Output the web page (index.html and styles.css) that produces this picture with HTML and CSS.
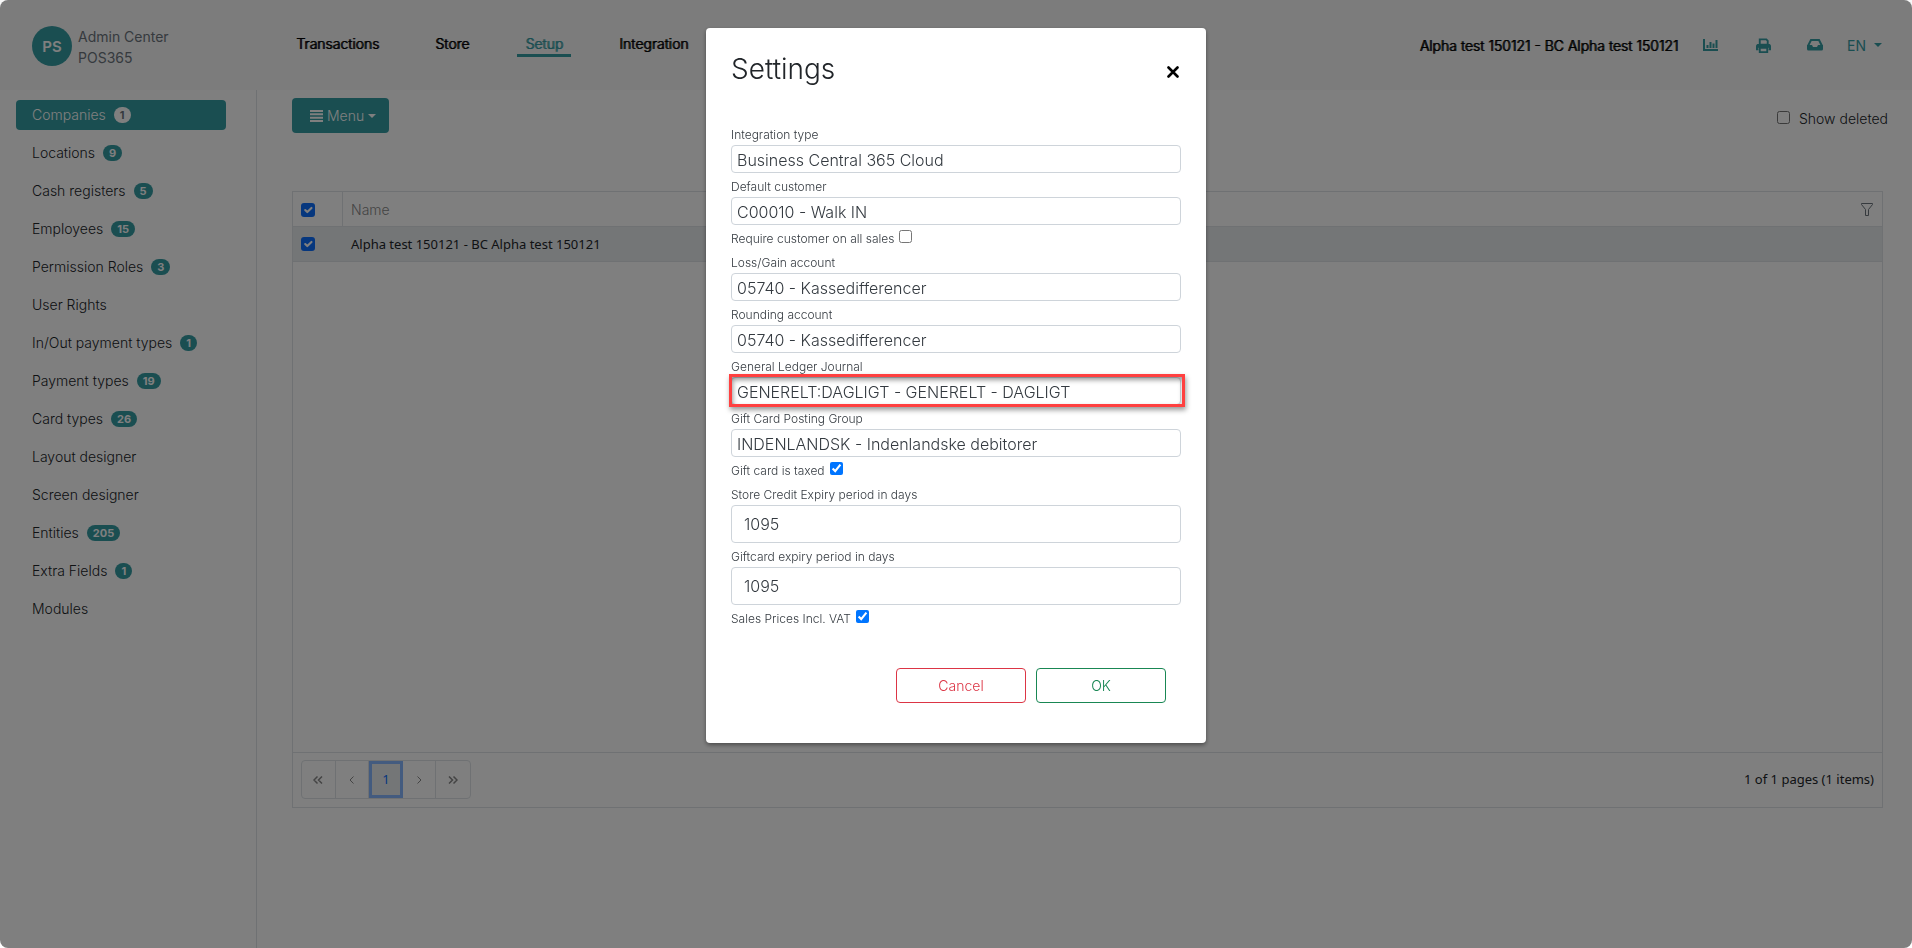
FILE: index.html
```html
<!DOCTYPE html>
<html lang="en">
<head>
    <meta charset="UTF-8">
    <meta name="viewport" content="width=device-width, initial-scale=1.0">
    <title>Admin Center POS365</title>
    <link rel="stylesheet" href="styles.css">
</head>
<body>
    <header class="topbar">
        <a class="brand" href="#">
            <span class="brand-logo">PS</span>
            <span class="brand-name">Admin Center<br>POS365</span>
        </a>
        <nav class="main-nav">
            <a href="#">Transactions</a>
            <a href="#">Store</a>
            <a href="#" class="active">Setup</a>
            <a href="#">Integration</a>
        </nav>
        <div class="topbar-right">
            <span class="company">Alpha test 150121 - BC Alpha test 150121</span>
            <a href="#" class="icon-link" aria-label="Reports">
                <svg width="16" height="14" viewBox="0 0 16 14"><path d="M1 1v11h14" fill="none" stroke="currentColor" stroke-width="2"/><path d="M3.500 7h2v3h-2zM6.500 4h2v6h-2zM9.500 5.500h2V10h-2zM12.500 2h2v8h-2z" fill="currentColor"/></svg>
            </a>
            <a href="#" class="icon-link" aria-label="Print">
                <svg width="15" height="15" viewBox="0 0 16 16"><path d="M4 7V1.500h7l1.500 1.500V7M2.500 12H1V9q0-2 2-2h10q2 0 2 2v3h-1.500M4 10.500h8v4.500H4z" fill="none" stroke="currentColor" stroke-width="2"/><path d="M1 7h14v3.500H1z" fill="currentColor"/></svg>
            </a>
            <a href="#" class="icon-link" aria-label="Inbox">
                <svg width="16" height="12" viewBox="0 0 16 12"><path d="M1.200 6.500 4 1h8l2.800 5.500" fill="none" stroke="currentColor" stroke-width="2"/><path d="M0 6h5l1 2h4l1-2h5v4q0 1.500-1.500 1.500h-13Q0 11.500 0 10z" fill="currentColor"/></svg>
            </a>
            <button type="button" class="lang">EN <span class="caret"></span></button>
        </div>
    </header>

    <div class="layout">
        <nav class="sidebar">
            <a href="#" class="active">Companies <span class="badge">1</span></a>
            <a href="#">Locations <span class="badge">9</span></a>
            <a href="#">Cash registers <span class="badge">5</span></a>
            <a href="#">Employees <span class="badge">15</span></a>
            <a href="#">Permission Roles <span class="badge">3</span></a>
            <a href="#">User Rights</a>
            <a href="#">In/Out payment types <span class="badge">1</span></a>
            <a href="#">Payment types <span class="badge">19</span></a>
            <a href="#">Card types <span class="badge">26</span></a>
            <a href="#">Layout designer</a>
            <a href="#">Screen designer</a>
            <a href="#">Entities <span class="badge">205</span></a>
            <a href="#">Extra Fields <span class="badge">1</span></a>
            <a href="#">Modules</a>
        </nav>

        <main class="content">
            <div class="toolbar">
                <button type="button" class="btn-menu">
                    <svg width="13" height="12" viewBox="0 0 13 12"><path d="M0 1h13M0 4.333h13M0 7.667h13M0 11h13" stroke="currentColor" stroke-width="2"/></svg>
                    Menu<span class="caret"></span>
                </button>
                <label class="show-deleted"><input type="checkbox"> Show deleted</label>
            </div>

            <div class="grid">
                <div class="grid-body">
                    <table>
                        <thead>
                            <tr>
                                <th class="col-check"><input type="checkbox" class="check" aria-label="Select all" checked></th>
                                <th>Name</th>
                                <th class="col-filter">
                                    <button type="button" class="filter" aria-label="Filter">
                                        <svg width="12" height="13" viewBox="0 0 12 13"><path d="M.5.5h11v1L7.500 6.500v6h-3v-6L.5 1.500z" fill="none" stroke="currentColor"/></svg>
                                    </button>
                                </th>
                            </tr>
                        </thead>
                        <tbody>
                            <tr>
                                <td><input type="checkbox" class="check" aria-label="Select row" checked></td>
                                <td colspan="2">Alpha test 150121 - BC Alpha test 150121</td>
                            </tr>
                        </tbody>
                    </table>
                </div>
                <div class="grid-footer">
                    <div class="pager">
                        <button type="button" aria-label="First page"><svg width="10" height="8" viewBox="0 0 10 8"><path d="M4.500.5 1 4l3.500 3.500M9 .5 5.500 4 9 7.500" fill="none" stroke="currentColor" stroke-width="1.500"/></svg></button>
                        <button type="button" aria-label="Previous page"><svg width="5" height="8" viewBox="0 0 5 8"><path d="M4.500.5 1 4l3.500 3.500" fill="none" stroke="currentColor"/></svg></button>
                        <button type="button" class="current">1</button>
                        <button type="button" aria-label="Next page"><svg width="5" height="8" viewBox="0 0 5 8"><path d="M.5.5 4 4 .5 7.500" fill="none" stroke="currentColor"/></svg></button>
                        <button type="button" aria-label="Last page"><svg width="10" height="8" viewBox="0 0 10 8"><path d="M1 .5 4.500 4 1 7.500M5.500.5 9 4 5.500 7.500" fill="none" stroke="currentColor" stroke-width="1.500"/></svg></button>
                    </div>
                    <span>1 of 1 pages (1 items)</span>
                </div>
            </div>
        </main>
    </div>

    <div class="overlay">
        <form class="modal" role="dialog" aria-labelledby="modalTitle">
            <div class="modal-header">
                <h3 id="modalTitle">Settings</h3>
                <button type="button" class="close" aria-label="Close">
                    <svg width="12" height="12" viewBox="0 0 12 12"><path d="M1.500 1.500l9 9M10.500 1.500l-9 9" stroke="currentColor" stroke-width="2.600" stroke-linecap="round"/></svg>
                </button>
            </div>

            <label for="integrationType">Integration type</label>
            <select id="integrationType"><option>Business Central 365 Cloud</option></select>

            <label for="defaultCustomer">Default customer</label>
            <select id="defaultCustomer"><option>C00010 - Walk IN</option></select>

            <label class="check-row">Require customer on all sales <input type="checkbox"></label>

            <label for="lossGain">Loss/Gain account</label>
            <select id="lossGain"><option>05740 - Kassedifferencer</option></select>

            <label for="rounding">Rounding account</label>
            <select id="rounding"><option>05740 - Kassedifferencer</option></select>

            <label for="journal">General Ledger Journal</label>
            <div class="highlighted">
                <select id="journal"><option>GENERELT:DAGLIGT - GENERELT - DAGLIGT</option></select>
            </div>

            <label for="postingGroup">Gift Card Posting Group</label>
            <select id="postingGroup"><option>INDENLANDSK - Indenlandske debitorer</option></select>

            <label class="check-row">Gift card is taxed <input type="checkbox" checked></label>

            <label for="storeCredit">Store Credit Expiry period in days</label>
            <input type="text" id="storeCredit" value="1095">

            <label for="giftcardExpiry">Giftcard expiry period in days</label>
            <input type="text" id="giftcardExpiry" value="1095">

            <label class="check-row">Sales Prices Incl. VAT <input type="checkbox" checked></label>

            <div class="modal-footer">
                <button type="button" class="btn-cancel">Cancel</button>
                <button type="button" class="btn-ok">OK</button>
            </div>
        </form>
    </div>
</body>
</html>
```

FILE: styles.css
```css
* {
    box-sizing: border-box;
}
body {
    margin: 0;
    min-height: 100vh;
    display: flex;
    flex-direction: column;
    background: #fff;
    color: #212529;
    font-family: Inter, sans-serif;
    font-size: 14px;
    font-weight: 300;
    line-height: 21px;
}
a {
    color: inherit;
    text-decoration: none;
}
button, input, select {
    font: inherit;
    color: inherit;
}
button {
    cursor: pointer;
}
svg {
    display: block;
}
.caret {
    display: inline-block;
    border-top: 4px solid;
    border-left: 4px solid transparent;
    border-right: 4px solid transparent;
}

/* Top bar */
.topbar {
    display: flex;
    align-items: center;
    height: 90px;
    padding: 0 30px 0 32px;
    background: #f8f8f8;
}
.brand {
    display: flex;
    align-items: center;
    gap: 6px;
    width: 256px;
    padding-top: 2px;
    color: #6c757d;
    font-weight: 400;
}
.brand-logo {
    display: flex;
    align-items: center;
    justify-content: center;
    width: 40px;
    height: 40px;
    border-radius: 50%;
    background: #359ca3;
    color: #fff;
    font-size: 15px;
    font-weight: 600;
}
.brand-name {
    padding-top: 2px;
}
.main-nav {
    display: flex;
    gap: 40px;
    color: #000;
    text-shadow: 1px 0;
}
.main-nav a {
    padding: 0 8px;
    border-bottom: 3px solid transparent;
}
.main-nav .active {
    color: #359ca3;
    border-color: #359ca3;
}
.topbar-right {
    display: flex;
    align-items: center;
    margin-left: auto;
    color: #359ca3;
}
.company {
    margin-right: 7px;
    color: #000;
    text-shadow: 1px 0;
}
.icon-link {
    display: flex;
    justify-content: center;
    width: 52px;
}
.lang {
    display: flex;
    align-items: center;
    gap: 8px;
    padding: 0;
    margin-left: 6px;
    border: none;
    background: none;
    font-weight: 400;
}

/* Side menu */
.layout {
    display: flex;
    flex: 1;
}
.sidebar {
    display: flex;
    flex-direction: column;
    gap: 8px;
    flex: 0 0 257px;
    padding: 10px 30px 10px 16px;
    border-right: 1px solid #dee2e6;
}
.sidebar a {
    display: flex;
    align-items: center;
    gap: 8px;
    height: 30px;
    padding: 0 16px 1px;
    border-radius: 4px;
}
.badge {
    padding: 0 6px;
    border-radius: 8px;
    background: #359ca3;
    color: #fff;
    font-size: 11px;
    font-weight: 700;
    line-height: 16px;
}
.sidebar .active {
    background: #359ca3;
    color: #fff;
}
.sidebar .active .badge {
    background: #fff;
    color: #6c757d;
}

/* Content */
.content {
    display: flex;
    flex-direction: column;
    flex: 1;
    padding: 8px 29px 140px 35px;
}
.toolbar {
    display: flex;
    justify-content: space-between;
    align-items: center;
    margin-bottom: 58px;
}
.btn-menu {
    display: flex;
    align-items: center;
    gap: 4px;
    height: 35px;
    padding: 0 13px 0 18px;
    border: none;
    border-radius: 4px;
    background: #359ca3;
    color: #fff;
}
.show-deleted {
    display: flex;
    align-items: center;
    gap: 9px;
    margin-right: -5px;
    padding-top: 6px;
}
.show-deleted input {
    margin: 0 0 2px;
}
.grid {
    display: flex;
    flex-direction: column;
    flex: 1;
    border: 1px solid #dee2e6;
    font-family: "Noto Sans", sans-serif;
    font-size: 13px;
    font-weight: 400;
}
.grid-body {
    flex: 1;
}
table {
    width: 100%;
    border-collapse: separate;
    border-spacing: 0;
}
th, td {
    height: 35px;
    padding: 0 8px;
    border-bottom: 1px solid #dee2e6;
    text-align: left;
}
th {
    color: #888;
    font-family: Inter, sans-serif;
    font-size: 14px;
    font-weight: 300;
}
td {
    background: #e9ecef;
}
.col-check {
    width: 50px;
    padding-top: 2px;
    border-right: 1px solid #dee2e6;
}
.col-filter {
    width: 40px;
}
.filter {
    margin-left: auto;
    padding: 0 1px 0 0;
    border: none;
    background: none;
    display: block;
    color: #6c757d;
}
.check {
    appearance: none;
    display: block;
    width: 14px;
    height: 14px;
    margin: 0;
    border-radius: 3px;
    background: #0d6efd url("data:image/svg+xml,%3Csvg xmlns='http://www.w3.org/2000/svg' viewBox='0 0 20 20'%3E%3Cpath fill='none' stroke='%23fff' stroke-linecap='round' stroke-linejoin='round' stroke-width='3' d='m6 10 3 3 6-6'/%3E%3C/svg%3E");
}
.grid-footer {
    display: flex;
    justify-content: space-between;
    align-items: center;
    padding: 7px 8px 8px;
    border-top: 1px solid #dee2e6;
}
.pager {
    display: flex;
    width: 170px;
    border: 1px solid #dee2e6;
    border-radius: 4px;
    color: #888;
}
.pager button {
    display: flex;
    align-items: center;
    justify-content: center;
    width: 34px;
    height: 37px;
    padding: 0;
    border: none;
    border-right: 1px solid #dee2e6;
    background: none;
}
.pager button:last-child {
    border-right: none;
}
.pager .current {
    border: 3px solid #86b7fe;
    background: #e9ecef;
    color: #0d6efd;
}

/* Settings dialog */
.overlay {
    position: fixed;
    inset: 0;
    display: flex;
    justify-content: center;
    align-items: flex-start;
    padding-top: 28px;
    border-radius: 8px;
    background: rgba(0, 0, 0, 0.5);
}
.modal {
    display: flex;
    flex-direction: column;
    width: 500px;
    padding: 24px 25px 40px;
    border-radius: 4px;
    background: #fff;
    box-shadow: 0 2px 4px rgba(0, 0, 0, 0.4);
}
.modal-header {
    display: flex;
    justify-content: space-between;
    align-items: center;
    margin-bottom: 35px;
}
.modal h3 {
    margin: 0;
    font-size: 28px;
    font-weight: 300;
    line-height: 34px;
}
.close {
    padding: 6px 2px 0;
    border: none;
    background: none;
    color: #000;
}
.modal label {
    padding-top: 3px;
    font-size: 12px;
    line-height: 21px;
    color: #343a40;
}
.check-row {
    display: flex;
    align-items: center;
    gap: 5px;
}
.check-row input {
    margin: 0 0 4px;
}
.modal select, .modal input[type="text"] {
    appearance: none;
    width: 100%;
    height: 28px;
    padding: 2px 5px 0;
    border: 1px solid #ced4da;
    border-radius: 4px;
    background: #fff;
    color: #343a40;
    font-size: 16px;
}
.modal input[type="text"] {
    height: 38px;
    padding: 0 12px;
}
.highlighted {
    position: relative;
}
/* Red frame drawn over the field */
.highlighted::after {
    content: "";
    position: absolute;
    inset: -3px -4px -2px -2px;
    border: 3px solid #ff4040;
    box-shadow: 1px 3px 5px rgba(0, 0, 0, 0.4), inset 1px 3px 5px rgba(0, 0, 0, 0.4);
    pointer-events: none;
}
.modal-footer {
    display: flex;
    justify-content: flex-end;
    gap: 10px;
    margin-top: 39px;
    padding-right: 15px;
}
.modal-footer button {
    width: 130px;
    height: 35px;
    border: 1px solid;
    border-radius: 4px;
    background: #fff;
}
.modal-footer .btn-cancel {
    color: #dc3545;
}
.modal-footer .btn-ok {
    color: #198754;
}
```
